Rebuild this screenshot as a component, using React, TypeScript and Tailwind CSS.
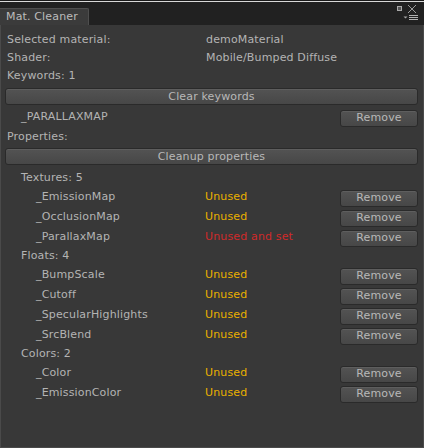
import React from "react";

const font = { fontFamily: '"DejaVu Sans", Verdana, sans-serif', letterSpacing: "0.15px" };

function Btn({ children, className = "" }: { children: React.ReactNode; className?: string }) {
  return (
    <div
      className={
        "h-[17px] flex items-center justify-center rounded-[3px] border border-[#2a2a2a] bg-gradient-to-b from-[#535353] to-[#474747] text-[#b8b8b8] text-[11px] leading-none shadow-[inset_0_1px_0_#5e5e5e] " +
        className
      }
    >
      <span className="-mt-[1px]">{children}</span>
    </div>
  );
}

function Item({ name, status, red }: { name: string; status: string; red?: boolean }) {
  return (
    <div className="h-[20px] flex items-center pl-[31px] pr-[5px]">
      <span className="w-[169px] pb-[1px]">{name}</span>
      <span className={"pb-[1px] " + (red ? "text-[#d12a2a]" : "text-[#e8b100]")}>{status}</span>
      <Btn className="ml-auto w-[78px]">Remove</Btn>
    </div>
  );
}

function Header({ text }: { text: string }) {
  return (
    <div className="h-[18px] flex items-center pl-[16px]">
      <span className="pb-[1px]">{text}</span>
    </div>
  );
}

export default function App() {
  return (
    <div style={font} className="w-[424px] h-[448px] bg-[#383838] text-[#b4b4b4] text-[11px] flex flex-col overflow-hidden relative">
      <div className="h-[1px] bg-[#1a1a1a]" />
      <div className="h-[1px] bg-[#d9d9d9]" />
      <div className="h-[23px] bg-[#212121] flex items-end relative">
        <div className="h-[17px] w-[89px] bg-[#3b3b3b] border-t border-r border-[#4e4e4e] rounded-tr-[2px] flex items-center pl-[6px] text-[#bcbcbc] text-[11px]">
          <span className="pt-[1px]">Mat. Cleaner</span>
        </div>
        <div className="absolute left-[397px] top-[4px] w-[5px] h-[5px] border border-[#a8a8a8] bg-[#555]" />
        <svg className="absolute left-[407px] top-[2px]" width="10" height="10" viewBox="0 0 10 10">
          <path d="M1 1 L9 9 M9 1 L1 9" stroke="#9a9a9a" strokeWidth="1" />
        </svg>
        <svg className="absolute left-[403px] top-[12px]" width="16" height="8" viewBox="0 0 16 8">
          <path d="M0.5 2.5 L4.5 2.5 L2.5 4.5 Z" fill="#a8a8a8" />
          <rect x="6" y="1" width="9" height="1" fill="#b0b0b0" />
          <rect x="6" y="3" width="9" height="1" fill="#b0b0b0" />
          <rect x="6" y="5" width="9" height="1" fill="#b0b0b0" />
        </svg>
      </div>
      <div className="flex-1 border-l border-r border-b border-[#4a4a4a] flex flex-col pt-[6px]">
        <div className="h-[18px] flex items-center pl-[6px]">
          <span className="w-[199px]">Selected material:</span>
          <span>demoMaterial</span>
        </div>
        <div className="h-[18px] flex items-center pl-[6px]">
          <span className="w-[199px]">Shader:</span>
          <span>Mobile/Bumped Diffuse</span>
        </div>
        <div className="h-[18px] flex items-center pl-[6px]">
          <span>Keywords: 1</span>
        </div>
        <div className="pl-[4px] pr-[5px] mt-[3px]">
          <Btn>Clear keywords</Btn>
        </div>
        <div className="h-[20px] mt-[3px] flex items-center pl-[20px] pr-[5px]">
          <span className="pb-[1px]">_PARALLAXMAP</span>
          <Btn className="ml-auto w-[78px]">Remove</Btn>
        </div>
        <div className="h-[18px] flex items-center pl-[6px]">
          <span>Properties:</span>
        </div>
        <div className="pl-[4px] pr-[5px] mt-[2px]">
          <Btn>Cleanup properties</Btn>
        </div>
        <div className="mt-[5px] flex flex-col pl-[4px]">
          <Header text="Textures: 5" />
          <Item name="_EmissionMap" status="Unused" />
          <Item name="_OcclusionMap" status="Unused" />
          <Item name="_ParallaxMap" status="Unused and set" red />
          <Header text="Floats: 4" />
          <Item name="_BumpScale" status="Unused" />
          <Item name="_Cutoff" status="Unused" />
          <Item name="_SpecularHighlights" status="Unused" />
          <Item name="_SrcBlend" status="Unused" />
          <Header text="Colors: 2" />
          <Item name="_Color" status="Unused" />
          <Item name="_EmissionColor" status="Unused" />
        </div>
      </div>
    </div>
  );
}
